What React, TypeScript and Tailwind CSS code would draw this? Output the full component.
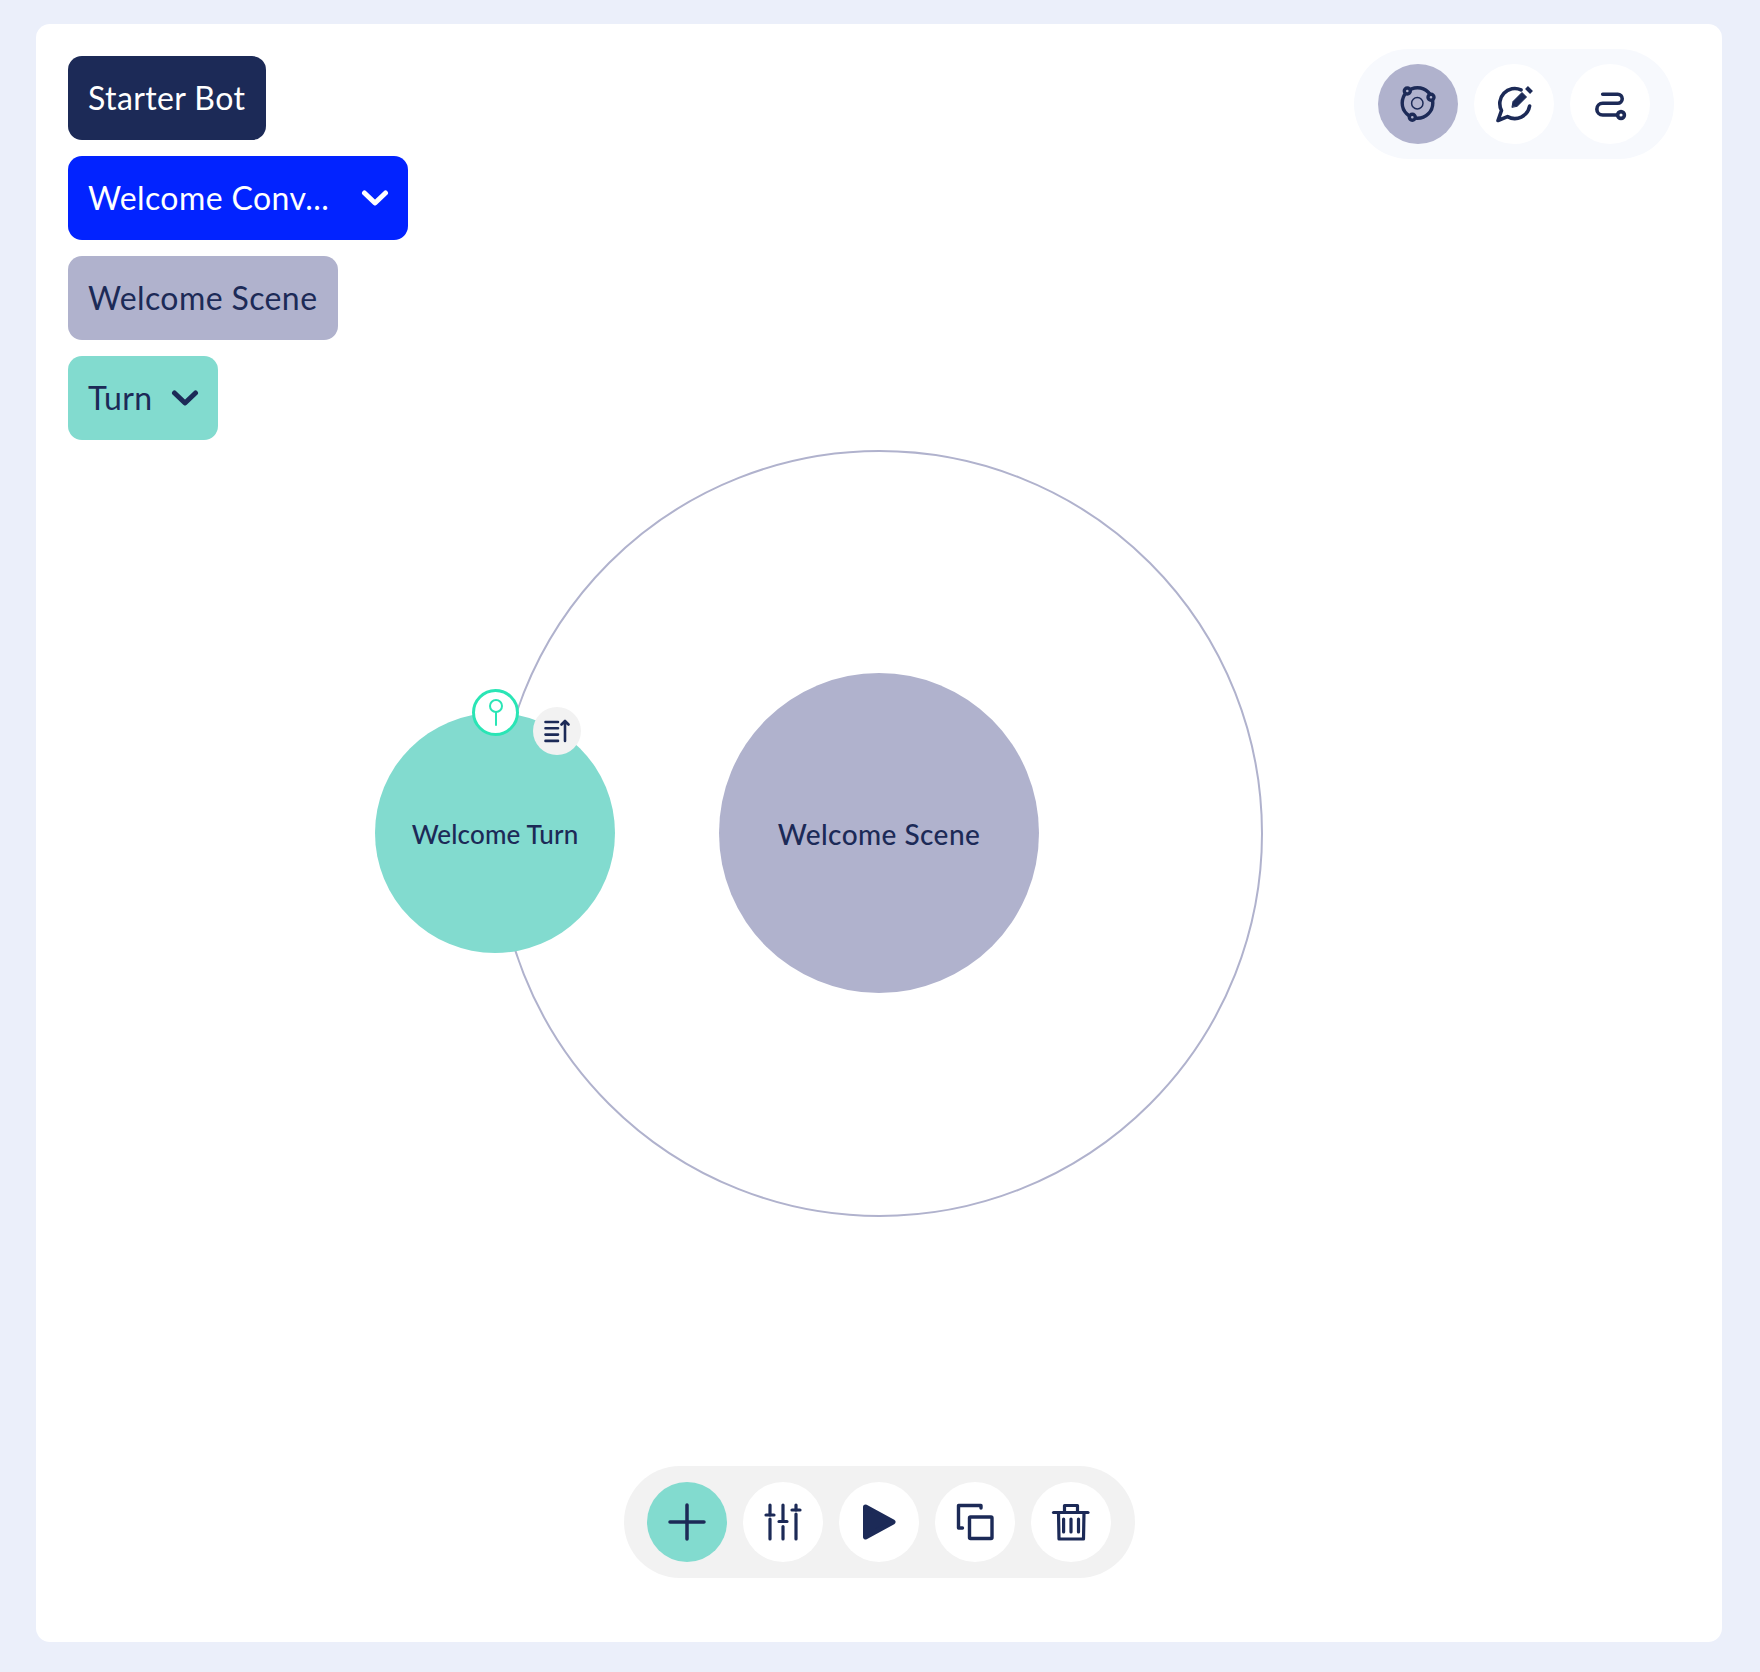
import React from "react";

const navy = "#1c2a57";

function Chevron({ color }: { color: string }) {
  return (
    <svg width="28" height="18" viewBox="0 0 28 18" fill="none">
      <path d="M3.5 4L14 14L24.5 4" stroke={color} strokeWidth="5" strokeLinecap="round" strokeLinejoin="round" />
    </svg>
  );
}

function Crumb({ label, cls, chevron, w }: { label: string; cls: string; chevron?: string; w: string }) {
  return (
    <div className={`flex h-[84px] items-center justify-between rounded-[14px] pl-5 pr-[19px] text-[32px] tracking-[0.4px] ${cls} ${w}`}>
      <span>{label}</span>
      {chevron ? <Chevron color={chevron} /> : null}
    </div>
  );
}

function RoundBtn({ children, cls = "bg-white" }: { children: React.ReactNode; cls?: string }) {
  return <div className={`flex h-20 w-20 items-center justify-center rounded-full ${cls}`}>{children}</div>;
}

function Icon({ children, sw = 3 }: { children: React.ReactNode; sw?: number }) {
  return (
    <svg width="40" height="40" viewBox="0 0 40 40" fill="none" stroke={navy} strokeWidth={sw} strokeLinecap="round" strokeLinejoin="round">
      {children}
    </svg>
  );
}

export default function App() {
  return (
    <div className="h-[1672px] w-[1760px] bg-[#ebeffa] px-9 pt-6 font-['Lato',sans-serif]">
      <div className="flex h-[1618px] w-[1686px] flex-col rounded-[14px] bg-white">
        <div className="flex h-[426px] items-start justify-between pl-8 pr-[48px]">
          <div className="flex flex-col gap-4 pt-8">
            <Crumb label="Starter Bot" cls="bg-[#1c2a57] text-white" w="w-[198px]" />
            <Crumb label="Welcome Conv..." cls="bg-[#0223ff] text-white" chevron="#ffffff" w="w-[340px]" />
            <Crumb label="Welcome Scene" cls="bg-[#b0b2cd] text-[#1c2a57]" w="w-[270px]" />
            <Crumb label="Turn" cls="bg-[#82dbcf] text-[#1c2a57]" chevron="#1c2a57" w="w-[150px]" />
          </div>
          <div className="mt-[25px] flex h-[110px] w-[320px] items-center justify-center gap-4 rounded-full bg-[#f7f9fd]">
            <RoundBtn cls="bg-[#b0b2cd]">
              <Icon sw={3.4}>
                <circle cx="19.5" cy="19" r="15.3" />
                <circle cx="9.3" cy="7" r="3" fill="#b0b2cd" />
                <circle cx="33" cy="13.300" r="3" fill="#b0b2cd" />
                <circle cx="14.300" cy="33.300" r="3" fill="#b0b2cd" />
                <circle cx="19.300" cy="19.300" r="5.700" strokeWidth="1.500" />
              </Icon>
            </RoundBtn>
            <RoundBtn>
              <Icon sw={3.6}>
                <path d="M27 5.900A15 15 0 0 0 7.500 26.500L4 36.500L13.500 32.600A15 15 0 0 0 35.600 22" />
                <path d="M18 23L19 17.500L28 8.500L32.500 13L23.500 22Z" fill={navy} strokeWidth="1" />
                <path d="M32.500 3.500L37.500 8.500" strokeWidth="4" strokeLinecap="butt" />
              </Icon>
            </RoundBtn>
            <RoundBtn>
              <Icon sw={3.6}>
                <path d="M12.700 10.300H27.700A4.500 4.500 0 0 1 27.700 19.300H12.700A5.850 5.850 0 0 0 12.700 31H27.500" />
                <circle cx="31" cy="31" r="3.400" />
              </Icon>
            </RoundBtn>
          </div>
        </div>

        <div className="relative flex-1">
          <div className="absolute left-[460px] top-0 h-[767px] w-[767px] rounded-full border-2 border-[#b0b2cd]" />
          <div className="absolute left-[683px] top-[223px] flex h-80 w-80 items-center justify-center rounded-full bg-[#b0b2cd] pt-[2px] text-[28px] font-medium tracking-[0.45px] text-[#1c2a57]">
            Welcome Scene
          </div>
          <div className="absolute left-[339px] top-[263px] flex h-60 w-60 items-center justify-center rounded-full bg-[#82dbcf] pt-[2px] text-[26px] font-medium tracking-[0.15px] text-[#1c2a57]">
            Welcome Turn
          </div>
          <div className="absolute left-[436px] top-[239px] flex h-[47px] w-[47px] items-center justify-center rounded-full border-[3px] border-[#2ae5b5] bg-white">
            <svg width="22" height="30" viewBox="0 0 22 30" fill="none" stroke="#2ae5b5" strokeWidth="2">
              <circle cx="11" cy="8" r="6" />
              <path d="M11 14V27" strokeLinecap="round" />
            </svg>
          </div>
          <div className="absolute left-[497px] top-[257px] flex h-12 w-12 items-center justify-center rounded-full bg-[#f2f2f2]">
            <svg width="26" height="24" viewBox="0 0 26 24" fill="none" stroke={navy} strokeWidth="2.600" strokeLinecap="round" strokeLinejoin="round">
              <path d="M1.500 3H14M1.500 9.300H14M1.500 15.600H14M1.500 21.900H14" />
              <path d="M21 22V2M17.500 5.500L21 2L24.500 5.500" />
            </svg>
          </div>
        </div>

        <div className="flex justify-center pb-[64px]">
          <div className="flex h-[112px] w-[511px] items-center justify-center gap-4 rounded-full bg-[#f2f2f2]">
            <RoundBtn cls="bg-[#82dbcf]">
              <Icon>
                <path d="M20 3V37M3 20H37" strokeWidth="3.500" />
              </Icon>
            </RoundBtn>
            <RoundBtn>
              <Icon sw={3.2}>
                <path d="M7 3V13M7 17V37M20 3V19.500M20 24.500V37M33 3V8M33 12V37" />
                <path d="M3 13H11M16 19.500H24M29 8H37" />
              </Icon>
            </RoundBtn>
            <RoundBtn>
              <svg width="40" height="40" viewBox="0 0 40 40" fill={navy} stroke={navy} strokeWidth="5" strokeLinejoin="round">
                <path d="M6.500 5L34 20L6.500 35Z" />
              </svg>
            </RoundBtn>
            <RoundBtn>
              <Icon sw={3.4}>
                <path d="M26 6V3.500H3.500V26H7.500" />
                <rect x="14.500" y="15" width="22.500" height="21.500" rx="1" />
              </Icon>
            </RoundBtn>
            <RoundBtn>
              <Icon sw={3.2}>
                <path d="M2.500 10.500H37" />
                <path d="M7.500 10.500L8 37H32.500L33 10.500" />
                <path d="M13.500 10.500V3.500H26.500V10.500" />
                <path d="M12.600 17V30M20 17V30M27.500 17V30" />
              </Icon>
            </RoundBtn>
          </div>
        </div>
      </div>
    </div>
  );
}
